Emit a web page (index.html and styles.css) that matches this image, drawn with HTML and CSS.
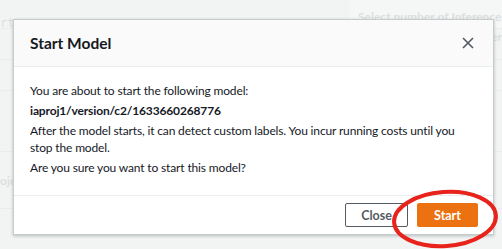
FILE: index.html
```html
<!DOCTYPE html>
<html lang="en">
<head>
  <meta charset="UTF-8" />
  <title>Start Model</title>
  <link rel="stylesheet" href="styles.css">
</head>
<body>
  <div class="page">
    <div class="page-top">
      <span class="ghost left-ghost">rt</span>
      <div class="top-panel"><span class="ghost">Select number of Inference units</span></div>
    </div>
    <div class="page-row"><span class="ghost">er</span></div>
    <div class="page-row"></div>
    <div class="page-row tall"></div>
    <div class="page-row"><span class="ghost">oje</span></div>
  </div>

  <div class="modal">
    <div class="modal-header">
      <h2>Start Model</h2>
      <svg class="close-icon" width="12" height="12" viewBox="0 0 12 12">
        <path d="M1 1 L11 11 M11 1 L1 11" stroke="#545b64" stroke-width="1.6" fill="none"/>
      </svg>
    </div>
    <div class="modal-body">
      <p>You are about to start the following model:</p>
      <p class="model-name">iaproj1/version/c2/1633660268776</p>
      <p>After the model starts, it can detect custom labels. You incur running costs until you stop the model.</p>
      <p>Are you sure you want to start this model?</p>
    </div>
    <div class="modal-footer">
      <button class="btn btn-normal">Close</button>
      <button class="btn btn-primary">Start</button>
    </div>
  </div>

  <svg class="annotation" width="110" height="62" viewBox="0 0 110 62">
    <ellipse cx="55" cy="31" rx="51" ry="27" fill="none" stroke="#e8231c" stroke-width="4" transform="rotate(-4 55 31)"/>
  </svg>
</body>
</html>
```

FILE: styles.css
```css
html, body {
  margin: 0;
  padding: 0;
}
body {
  width: 502px;
  height: 249px;
  overflow: hidden;
  background-color: #f2f3f3;
  font-family: Lato, 'Open Sans', sans-serif;
  color: #16191f;
  position: relative;
}
.page {
  display: flex;
  flex-direction: column;
}
.page-top {
  display: flex;
  justify-content: space-between;
  align-items: flex-end;
  height: 28px;
  border-bottom: 1px solid #eaeded;
}
.top-panel {
  width: 152px;
  height: 28px;
  background-color: #f5f6f6;
  padding: 5px 0 0 8px;
  box-sizing: border-box;
  overflow: hidden;
}
.ghost {
  color: #dcdfe0;
  font-size: 12px;
  font-weight: 700;
  white-space: nowrap;
}
.left-ghost {
  font-weight: 400;
  font-family: 'DejaVu Sans Mono', monospace;
  font-size: 12px;
  margin-bottom: -2px;
}
.page-row {
  height: 30px;
  border-bottom: 1px solid #eaeded;
  display: flex;
  justify-content: flex-end;
  font-size: 12px;
}
.page-row.tall {
  height: 60px;
}
.page-row:last-child {
  justify-content: flex-start;
  align-items: center;
  height: 56px;
}

.modal {
  position: absolute;
  left: 13px;
  top: 19px;
  width: 481px;
  height: 216px;
  box-sizing: border-box;
  background-color: #fff;
  border: 1px solid #c6cbcc;
  box-shadow: 0 1px 3px rgba(0, 28, 36, 0.25);
  display: flex;
  flex-direction: column;
}
.modal-header {
  height: 47px;
  box-sizing: border-box;
  background-color: #fafafa;
  border-bottom: 1px solid #eaeded;
  display: flex;
  align-items: center;
  justify-content: space-between;
  padding: 0 19px 0 16px;
}
.modal-header h2 {
  margin: 0;
  font-size: 15.5px;
  font-weight: 700;
}
.modal-body {
  flex: 1;
  padding: 15px 16px 0 16px;
  font-size: 12px;
  line-height: 17px;
  letter-spacing: -0.15px;
}
.modal-body p {
  margin: 0 0 3px 0;
}
.model-name {
  font-weight: 700;
}
.modal-footer {
  border-top: 1px solid #eaeded;
  display: flex;
  justify-content: flex-end;
  gap: 9px;
  padding: 7px 15px 7px 0;
}
.btn {
  height: 24px;
  box-sizing: border-box;
  font-family: inherit;
  font-size: 12.5px;
  font-weight: 700;
  padding: 0 12px;
  border-radius: 2px;
  cursor: pointer;
}
.btn-normal {
  width: 63px;
  background-color: #fff;
  color: #545b64;
  border: 1px solid #545b64;
}
.btn-primary {
  width: 61px;
  background-color: #ec7211;
  color: #fff;
  border: 1px solid #ec7211;
}
.annotation {
  position: absolute;
  left: 390px;
  top: 188px;
}
```
